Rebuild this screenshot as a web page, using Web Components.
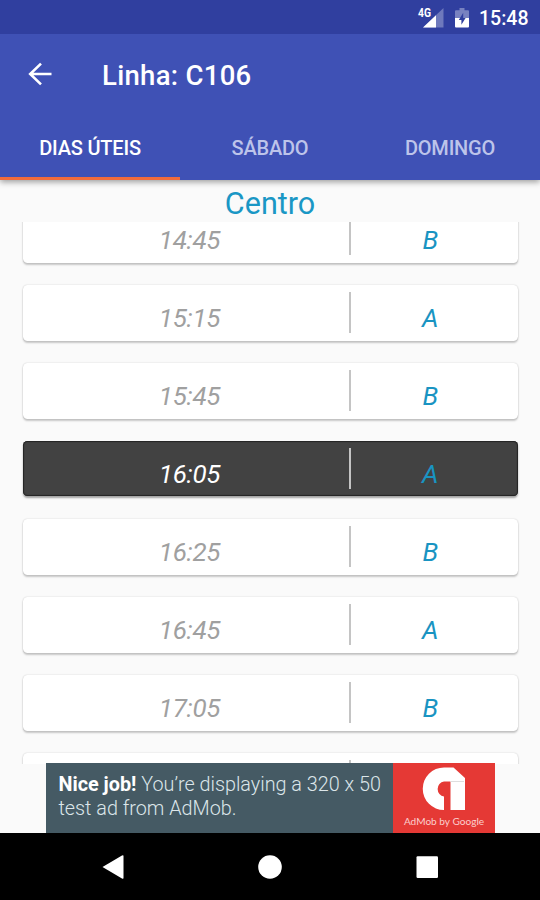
<!DOCTYPE html>
<html lang="pt">
<head>
<meta charset="utf-8">
<title>Linha: C106</title>
<style>
html, body { margin: 0; height: 100%; overflow: hidden; background: #fafafa; }
body { font-family: Roboto, "Liberation Sans", sans-serif; }
</style>
</head>
<body>
<bus-app></bus-app>
<script>
const define = (name, html) => customElements.define(name, class extends HTMLElement {
  constructor() {
    super();
    const t = document.createElement('template');
    t.innerHTML = html;
    this.attachShadow({ mode: 'open' }).appendChild(t.content.cloneNode(true));
  }
});

define('status-bar', `
<style>
:host { display: flex; justify-content: flex-end; align-items: center; box-sizing: border-box; height: 34px; padding-right: 12px; background: #303f9f; color: #fff; }
svg { display: block; }
.clock { font-size: 19.500px; font-weight: 500; line-height: 34px; width: 49px; padding-top: 3px; white-space: nowrap; }
.net { margin-right: 11px; }
.bat { margin-right: 10px; }
</style>
<svg class="net" width="27" height="34" viewBox="0 0 27 34">
  <path d="M26.5 8V27.5H6Z" fill="#fff" fill-opacity=".3"/>
  <path d="M19 15.2V27.5H6Z" fill="#fff"/>
  <text x="1" y="17" font-family="Roboto, sans-serif" font-size="12" font-weight="700" textLength="13" lengthAdjust="spacingAndGlyphs" fill="#fff">4G</text>
</svg>
<svg class="bat" width="14" height="34" viewBox="0 0 14 34">
  <path d="M4.500 8h5v2.200H13q1 0 1 1V18H0v-6.800q0-1 1-1h3.500Z" fill="#fff" fill-opacity=".35"/>
  <path d="M0 18h14v8.500q0 1-1 1H1q-1 0-1-1Z" fill="#fff"/>
  <path d="M8.200 12.800L3.800 20h2.600v4.800L10.600 18H8.200Z" fill="#303f9f"/>
</svg>
<div class="clock"><slot></slot></div>`);

define('app-toolbar', `
<style>
:host { display: flex; align-items: center; height: 82px; padding-left: 27px; color: #fff; }
svg { display: block; margin-right: 50px; margin-top: -3px; }
h1 { margin: 0; font-size: 27.500px; font-weight: 500; line-height: 32px; white-space: nowrap; letter-spacing: .3px; padding-top: 1px; }
</style>
<svg width="25" height="24" viewBox="0 0 25 24"><path d="M14 1.600L3.200 12 14 22.400M3.200 12H24.500" fill="none" stroke="#fff" stroke-width="2.600"/></svg>
<h1><slot></slot></h1>`);

define('tab-bar', `<style>:host { display: grid; grid-template-columns: repeat(3, 1fr); height: 64px; }</style><slot></slot>`);

define('tab-item', `
<style>
:host { display: flex; justify-content: center; box-sizing: border-box; padding-top: 20px; color: #bdc4ea; font-size: 20px; letter-spacing: -.2px; line-height: 24px; font-weight: 500; border-bottom: 3px solid transparent; }
:host([active]) { color: #fff; border-bottom-color: #f26b3a; }
</style>
<span><slot></slot></span>`);

define('time-row', `
<style>
:host { display: grid; grid-template-columns: 326px 1.500px 1fr; flex: none; height: 56px; background: #fff; border-radius: 4.500px; box-shadow: 0 0 1.500px rgba(0,0,0,.22), 0 2px 2px rgba(0,0,0,.2); color: #a0a0a0; font-size: 26px; font-style: italic; line-height: 30px; box-sizing: border-box; }
.line { height: 41px; margin-top: 7px; background: #c4c4c4; }
.time, .kind { display: flex; justify-content: center; padding-top: 18px; }
.time { padding-left: 7px; letter-spacing: -.3px; }
.kind { color: #1994c2; padding-right: 8px; }
:host([current]) { background: #424242; color: #fff; height: 55px; margin: 0 0 1px; box-shadow: inset 0 0 1px 1px #242424, 0 2px 2px rgba(0,0,0,.35); }
</style>
<div class="time"><slot></slot></div><div class="line"></div><div class="kind"><slot name="kind"></slot></div>`);

define('time-list', `
<style>
:host { display: flex; flex-direction: column; justify-content: flex-start; box-sizing: border-box; height: 542px; overflow: hidden; padding: 0 22px 0 23px; }
.rows { display: flex; flex-direction: column; gap: 22px; margin-top: -15px; }
</style>
<div class="rows"><slot></slot></div>`);

define('ad-banner', `
<style>
:host { display: flex; width: 449px; height: 70px; margin: -1px 0 0 46px; position: relative; background: #455a64; color: #dce6ea; }
p { flex: 1; margin: 0; padding: 10px 0 0 12.500px; font-size: 19.800px; line-height: 23.500px; font-weight: 300; white-space: nowrap; }
b { color: #fff; font-weight: 700; }
.logo { display: flex; flex-direction: column; width: 102px; background: #e53935; }
.name { text-align: center; font: 10.100px/15px Lato, sans-serif; color: #fbcfce; white-space: nowrap; }
svg { display: block; }
</style>
<p><b>Nice job!</b> You’re displaying a 320 x 50<br>test ad from AdMob.</p>
<div class="logo"><svg width="102" height="51" viewBox="0 0 102 51">
  <path d="M60.500 4.500H51A21.200 21.200 0 0 0 51 47V33.500A7.600 7.600 0 0 1 51 18.500H57.500V47H72V15Z" fill="#fff"/>
  <path d="M57.500 18.500H71" stroke="#dedede" stroke-width="1"/>
</svg><div class="name">AdMob by Google</div></div>`);

define('nav-bar', `
<style>
:host { display: flex; justify-content: space-between; align-items: center; box-sizing: border-box; height: 67px; padding: 0 101px; background: #000; }
svg { display: block; }
</style>
<svg width="24" height="26" viewBox="0 0 24 26"><path d="M1.500 13L21 1.500Q22.500.8 22.500 2V24Q22.500 25.200 21 24.500Z" fill="#fff"/></svg>
<svg width="24" height="24" viewBox="0 0 24 24"><circle cx="12" cy="12" r="11.800" fill="#fff"/></svg>
<svg width="24" height="24" viewBox="0 0 24 24"><rect x="1.500" y="1.200" width="21.500" height="21.800" rx="1.200" fill="#fff"/></svg>`);

define('bus-app', `
<style>
:host { display: flex; flex-direction: column; width: 540px; height: 900px; background: #fafafa; overflow: hidden; }
header { background: #3f51b5; box-shadow: 0 2px 6px rgba(0,0,0,.38); z-index: 1; position: relative; flex: none; }
h2 { margin: 0; height: 42px; flex: none; text-align: center; font-size: 30.500px; line-height: 47px; font-weight: 400; color: #1a97c5; }
</style>
<header>
  <status-bar>15:48</status-bar>
  <app-toolbar>Linha: C106</app-toolbar>
  <tab-bar><tab-item active>DIAS ÚTEIS</tab-item><tab-item>SÁBADO</tab-item><tab-item>DOMINGO</tab-item></tab-bar>
</header>
<h2>Centro</h2>
<time-list>
  <time-row>14:45<span slot="kind">B</span></time-row>
  <time-row>15:15<span slot="kind">A</span></time-row>
  <time-row>15:45<span slot="kind">B</span></time-row>
  <time-row current>16:05<span slot="kind">A</span></time-row>
  <time-row>16:25<span slot="kind">B</span></time-row>
  <time-row>16:45<span slot="kind">A</span></time-row>
  <time-row>17:05<span slot="kind">B</span></time-row>
  <time-row></time-row>
</time-list>
<ad-banner></ad-banner>
<nav-bar></nav-bar>`);
</script>
</body>
</html>
